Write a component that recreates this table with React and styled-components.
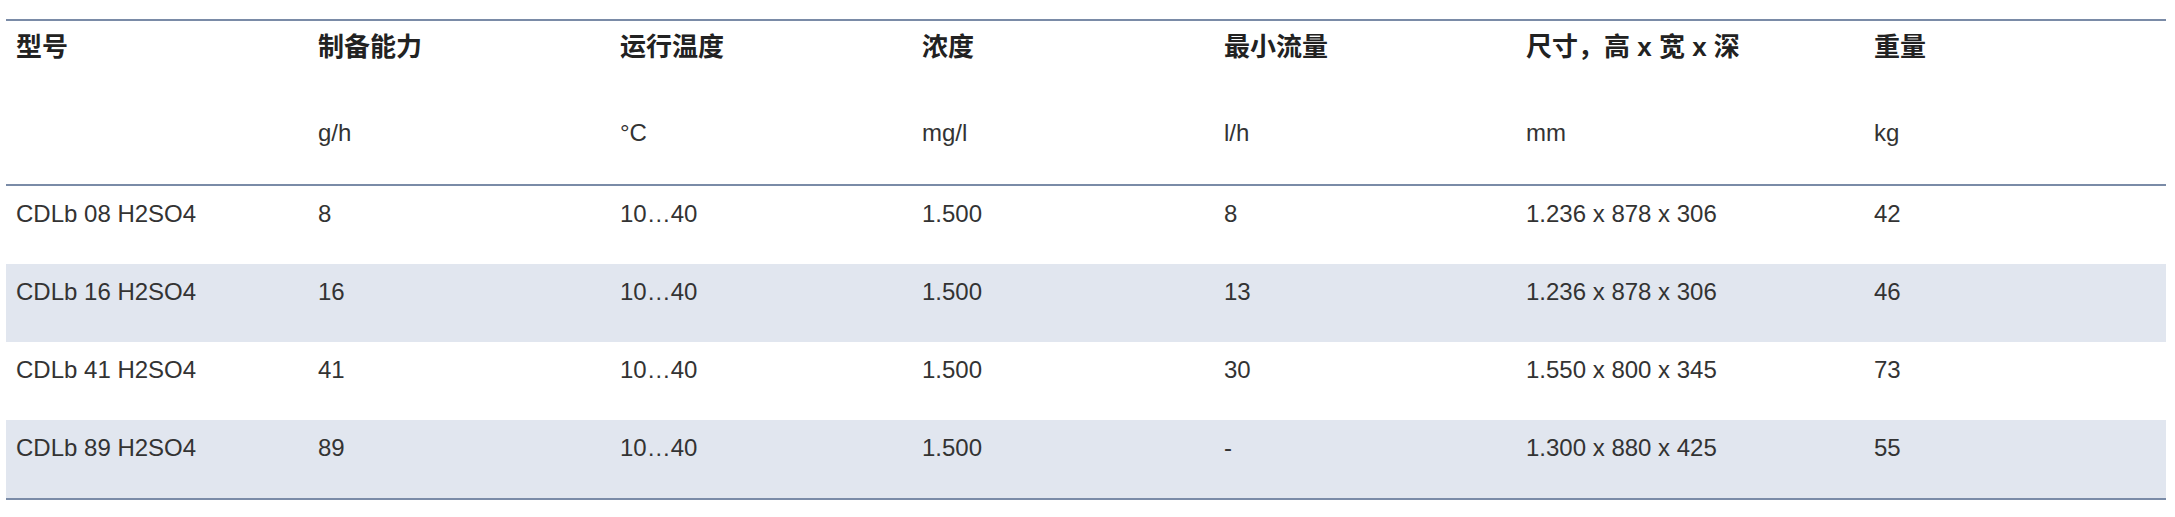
import React from 'react';
import styled, { createGlobalStyle } from 'styled-components';

const GlobalStyle = createGlobalStyle`
    html, body {
        margin: 0;
        padding: 0;
        background: #ffffff;
    }
    body {
        font-family: "Liberation Sans", "Noto Sans CJK SC", sans-serif;
        color: #333333;
    }
`;

const columns = '302px 302px 302px 302px 302px 348px 302px';

const Table = styled.div`
    width: 2160px;
    margin: 19px 0 0 6px;
    border-top: 2px solid #7a8ba7;
    border-bottom: 2px solid #7a8ba7;
`;

const HeadRow = styled.div`
    display: grid;
    grid-template-columns: ${columns};
    border-bottom: 2px solid #7a8ba7;
`;

const HeadCell = styled.div`
    display: flex;
    flex-direction: column;
    padding: 8px 10px 33px;
`;

const Title = styled.span`
    font-family: "Liberation Sans", "Noto Sans CJK SC", sans-serif;
    font-weight: 700;
    font-size: 26px;
    line-height: 36px;
    color: #222222;
`;

const Unit = styled.span`
    margin-top: 50px;
    font-size: 24px;
    line-height: 36px;
    min-height: 36px;
    color: #333333;
`;

const Row = styled.div`
    display: grid;
    grid-template-columns: ${columns};
    height: 78px;
    background: ${props => (props.$striped ? '#e1e6ef' : '#ffffff')};
`;

const Cell = styled.div`
    box-sizing: border-box;
    padding: 10px 10px 0;
    font-size: 24px;
    line-height: 36px;
    color: #333333;
    white-space: nowrap;
`;

const heads = [
    { title: '型号', unit: '' },
    { title: '制备能力', unit: 'g/h' },
    { title: '运行温度', unit: '°C' },
    { title: '浓度', unit: 'mg/l' },
    { title: '最小流量', unit: 'l/h' },
    { title: '尺寸，高 x 宽 x 深', unit: 'mm' },
    { title: '重量', unit: 'kg' },
];

const rows = [
    ['CDLb 08 H2SO4', '8', '10…40', '1.500', '8', '1.236 x 878 x 306', '42'],
    ['CDLb 16 H2SO4', '16', '10…40', '1.500', '13', '1.236 x 878 x 306', '46'],
    ['CDLb 41 H2SO4', '41', '10…40', '1.500', '30', '1.550 x 800 x 345', '73'],
    ['CDLb 89 H2SO4', '89', '10…40', '1.500', '-', '1.300 x 880 x 425', '55'],
];

export default function App() {
    return (
        <>
            <GlobalStyle />
            <Table>
                <HeadRow>
                    {heads.map(h => (
                        <HeadCell key={h.title}>
                            <Title>{h.title}</Title>
                            <Unit>{h.unit}</Unit>
                        </HeadCell>
                    ))}
                </HeadRow>
                {rows.map((r, i) => (
                    <Row key={r[0]} $striped={i % 2 === 1}>
                        {r.map((v, j) => (
                            <Cell key={j}>{v}</Cell>
                        ))}
                    </Row>
                ))}
            </Table>
        </>
    );
}
